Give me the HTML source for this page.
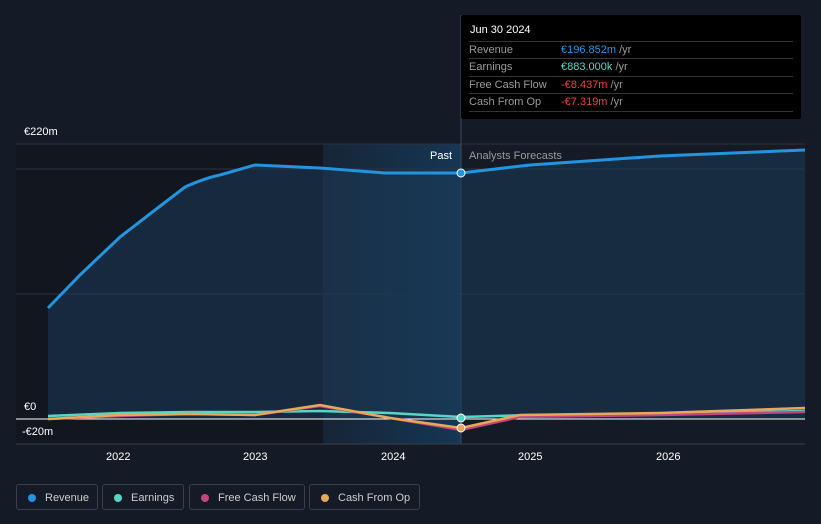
<!DOCTYPE html>
<html><head><style>
body{margin:0;width:821px;height:524px;background:#151b26;font-family:"Liberation Sans",sans-serif;overflow:hidden;position:relative}
.t{position:absolute;color:#fff;font-size:11px}
.tip{position:absolute;left:461px;top:15px;width:340px;height:104px;background:#000;border-radius:2px}
.tip .row{position:absolute;left:8px;width:324px;border-top:1px solid #333;font-size:11px;color:#999;height:17px;line-height:17px}
.tip .v{position:absolute;left:92px}
.leg{position:absolute;top:484px;height:26px;border:1px solid #3a3f4a;border-radius:3px;color:#ccc;font-size:11px;line-height:26px;box-sizing:border-box;padding-left:28px}
.leg i{position:absolute;left:11px;top:9px;width:8px;height:8px;border-radius:50%}
</style></head><body>
<svg width="821" height="524" style="position:absolute;left:0;top:0">
<defs><linearGradient id="hl" x1="0" x2="1"><stop offset="0" stop-color="#172536"/><stop offset="1" stop-color="#163654"/></linearGradient></defs>
<rect x="16" y="144" width="307" height="300" fill="#12161f"/>
<rect x="323" y="144" width="138" height="300" fill="url(#hl)"/>
<line x1="16" y1="144" x2="805" y2="144" stroke="#2c3340"/>
<line x1="16" y1="169" x2="805" y2="169" stroke="#2c3340"/>
<line x1="16" y1="294" x2="805" y2="294" stroke="#2c3340"/>
<line x1="16" y1="444" x2="805" y2="444" stroke="#3a404c"/>
<line x1="461" y1="15" x2="461" y2="444" stroke="#3a4a5c"/>
<path d="M48,308 L80,275 L120,237 L155,210 L185,187 Q205,178 220,175 L255,165 L320,168 L385,173 L461,173 L530,165 L660,156 L805,150 L805,419 L48,419Z" fill="#1c3a58" opacity="0.55"/>
<path d="M48,308 L80,275 L120,237 L155,210 L185,187 Q205,178 220,175 L255,165 L320,168 L385,173 L461,173 L530,165 L660,156 L805,150" fill="none" stroke="#2394df" stroke-width="3"/>
<line x1="16" y1="419" x2="805" y2="419" stroke="#fff"/>
<path d="M48,416 L120,413 L190,412 L255,412 L320,411 L390,413 L461,417 L530,415 L660,414 L805,411" fill="none" stroke="#58d6c5" stroke-width="2.5"/>
<path d="M48,419 L120,416 L190,414 L255,415 L320,406 L390,418 L461,430 L520,417 L660,415 L805,412" fill="none" stroke="#c2457f" stroke-width="2.5"/>
<path d="M48,419 L120,415 L190,414 L255,415 L320,405 L390,418 L461,428 L520,415 L660,413 L805,408" fill="none" stroke="#e8a858" stroke-width="2.5"/>
<circle cx="461" cy="173" r="4" fill="#2394df" stroke="#fff" stroke-width="1"/>
<circle cx="461" cy="418" r="4" fill="#58d6c5" stroke="#fff" stroke-width="1"/>
<circle cx="461" cy="428" r="4" fill="#e8a858" stroke="#fff" stroke-width="1"/>
</svg>
<div class="t" style="left:24px;top:126px">€220m</div>
<div class="t" style="left:24px;top:401px">€0</div>
<div class="t" style="left:22px;top:426px">-€20m</div>
<div class="t" style="left:430px;top:150px">Past</div>
<div class="t" style="left:469px;top:150px;color:#999">Analysts Forecasts</div>
<div class="t" style="left:106px;top:451px">2022</div>
<div class="t" style="left:243px;top:451px">2023</div>
<div class="t" style="left:381px;top:451px">2024</div>
<div class="t" style="left:518px;top:451px">2025</div>
<div class="t" style="left:656px;top:451px">2026</div>
<div class="tip">
<div style="position:absolute;left:9px;top:9px;color:#fff;font-size:11px">Jun 30 2024</div>
<div class="row" style="top:26px">Revenue<span class="v" style="color:#2394df">€196.852m <span style="color:#999">/yr</span></span></div>
<div class="row" style="top:43px">Earnings<span class="v" style="color:#58d6c5">€883.000k <span style="color:#999">/yr</span></span></div>
<div class="row" style="top:61px">Free Cash Flow<span class="v" style="color:#f2403a">-€8.437m <span style="color:#999">/yr</span></span></div>
<div class="row" style="top:78px;border-bottom:1px solid #333">Cash From Op<span class="v" style="color:#f2403a">-€7.319m <span style="color:#999">/yr</span></span></div>
</div>
<div class="leg" style="left:16px;width:82px"><i style="background:#2394df"></i>Revenue</div>
<div class="leg" style="left:102px;width:82px"><i style="background:#58d6c5"></i>Earnings</div>
<div class="leg" style="left:189px;width:116px"><i style="background:#c2457f"></i>Free Cash Flow</div>
<div class="leg" style="left:309px;width:111px"><i style="background:#e8a858"></i>Cash From Op</div>
</body></html>
